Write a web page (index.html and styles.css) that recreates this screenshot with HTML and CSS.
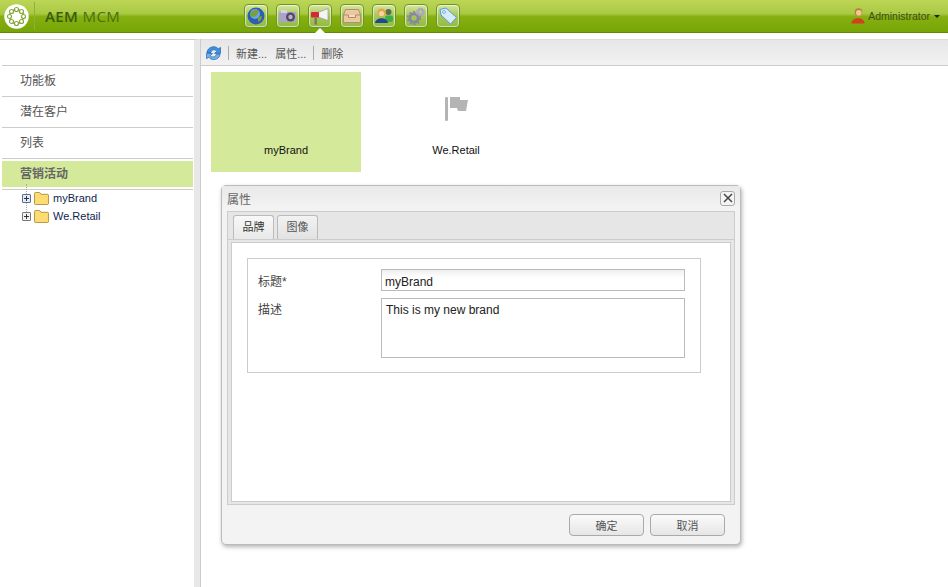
FILE: index.html
```html
<!DOCTYPE html>
<html lang="zh">

<head>
    <meta charset="UTF-8">
    <meta name="viewport" content="width=device-width, initial-scale=1.0">
    <title>AEM MCM</title>
    <link rel="stylesheet" href="styles.css">
</head>

<body>
    <header class="topbar">
        <svg class="logo" width="25" height="25" viewBox="0 0 25 25">
            <circle cx="12.5" cy="12.5" r="12.2" fill="#fff" />
            <circle cx="12.5" cy="12.5" r="7" fill="none" stroke="#86a93a" stroke-width="1.6" />
            <g fill="#fff" stroke="#86a93a" stroke-width="1.2">
                <circle cx="12.5" cy="5.5" r="2" />
                <circle cx="12.5" cy="19.5" r="2" />
                <circle cx="5.5" cy="12.5" r="2" />
                <circle cx="19.5" cy="12.5" r="2" />
                <circle cx="7.5" cy="7.5" r="2" />
                <circle cx="17.5" cy="7.5" r="2" />
                <circle cx="7.5" cy="17.5" r="2" />
                <circle cx="17.5" cy="17.5" r="2" />
            </g>
        </svg>
        <span class="brand-sep"></span>
        <span class="brand"><b>AEM</b> MCM</span>

        <nav class="apps">
            <a class="app">
                <svg width="18" height="18" viewBox="0 0 18 18">
                    <circle cx="9" cy="9" r="8.5" fill="#2c5fb0" />
                    <circle cx="8" cy="7" r="5" fill="#6ba6e0" />
                    <path d="M3 6 L8 2.5 L12 4 L10 8 L7 10 L4 9 Z M11 10 L15 9 L14 13 L11 15 Z" fill="#7a9f3c" />
                </svg>
            </a>
            <a class="app">
                <svg width="18" height="18" viewBox="0 0 18 18">
                    <rect x="0" y="5" width="17" height="10" rx="1" fill="#aca3cc" />
                    <rect x="2" y="3" width="6" height="3" fill="#d8d2e6" />
                    <circle cx="11.5" cy="10" r="4.5" fill="#4e4a62" />
                    <circle cx="11.5" cy="10" r="2.2" fill="#b8b4c8" />
                </svg>
            </a>
            <a class="app active">
                <svg width="18" height="18" viewBox="0 0 18 18">
                    <path d="M7 5.5 L17 1.5 V13.5 L7 10 Z" fill="#f4f4f0" stroke="#9a9a90" stroke-width=".7" />
                    <rect x="0" y="5" width="8" height="5.5" rx="1" fill="#d42a38" />
                    <rect x="3.5" y="10.5" width="2.4" height="7" fill="#85705c" />
                </svg>
            </a>
            <a class="app">
                <svg width="18" height="18" viewBox="0 0 18 18">
                    <path d="M2.5 2.5 H15.5 L17.5 8 V15.5 H.5 V8 Z" fill="#e9c8a2" stroke="#b98f66" />
                    <path d="M.5 8 H5.5 V10.5 H12.5 V8 H17.5" fill="#f3dcc0" stroke="#b58a5e" />
                </svg>
            </a>
            <a class="app">
                <svg width="18" height="18" viewBox="0 0 18 18">
                    <circle cx="13.5" cy="5" r="3" fill="#5e6a52" />
                    <rect x="10" y="8.5" width="8" height="6.5" rx="2" fill="#3aae48" />
                    <circle cx="6.5" cy="5.5" r="4" fill="#e9a63e" />
                    <circle cx="6.5" cy="6.5" r="2.6" fill="#f3d4a4" />
                    <path d="M0 16 C.5 9.5 12.5 9.5 13 16 Z" fill="#24488f" />
                </svg>
            </a>
            <a class="app">
                <svg width="18" height="18" viewBox="0 0 18 18">
                    <circle cx="7" cy="11" r="4.2" fill="none" stroke="#8986a0" stroke-width="3" />
                    <circle cx="7" cy="11" r="6.3" fill="none" stroke="#8986a0" stroke-width="1.6" stroke-dasharray="2 2" />
                    <circle cx="13.5" cy="5" r="2.6" fill="none" stroke="#aaa8bc" stroke-width="2.2" />
                    <circle cx="13.5" cy="5" r="4" fill="none" stroke="#aaa8bc" stroke-width="1.2" stroke-dasharray="1.6 1.6" />
                </svg>
            </a>
            <a class="app">
                <svg width="18" height="18" viewBox="0 0 18 18">
                    <path d="M1 2.5 L7 1 L17.5 10.5 L11.5 17 L2 8 Z" fill="#d6ebfa" stroke="#5b9bd0" />
                    <circle cx="5" cy="5" r="1.4" fill="#fff" stroke="#5b9bd0" stroke-width=".8" />
                </svg>
            </a>
        </nav>

        <div class="user">
            <svg width="14" height="16" viewBox="0 0 14 16">
                <circle cx="7.5" cy="4" r="3.8" fill="#b9803c" />
                <circle cx="7.8" cy="4.8" r="2.8" fill="#f3c79a" />
                <path d="M.5 15.5 C.5 8.5 13.5 8.5 13.5 15.5 Z" fill="#d2401c" />
            </svg>
            <span>Administrator</span>
            <i class="caret"></i>
        </div>
    </header>
    <div class="notch"></div>

    <div class="main">
        <aside class="sidebar">
            <div class="side-top"></div>
            <div class="side-item">功能板</div>
            <div class="side-item">潜在客户</div>
            <div class="side-item">列表</div>
            <div class="side-item current">营销活动</div>
            <ul class="tree">
                <li>
                    <i class="expander blue"></i>
                    <svg width="15" height="13" viewBox="0 0 16 14">
                        <path d="M.5 3 V1.5 Q.5 .5 1.5 .5 H6 L7.5 2.5 H14.5 Q15.5 2.5 15.5 3.5 V12.5 Q15.5 13.5 14.5 13.5 H1.5 Q.5 13.5 .5 12.5 Z" fill="#fddc72" stroke="#b08f3c" />
                    </svg>
                    <span>myBrand</span>
                </li>
                <li>
                    <i class="expander"></i>
                    <svg width="15" height="13" viewBox="0 0 16 14">
                        <path d="M.5 3 V1.5 Q.5 .5 1.5 .5 H6 L7.5 2.5 H14.5 Q15.5 2.5 15.5 3.5 V12.5 Q15.5 13.5 14.5 13.5 H1.5 Q.5 13.5 .5 12.5 Z" fill="#fddc72" stroke="#b08f3c" />
                    </svg>
                    <span>We.Retail</span>
                </li>
            </ul>
        </aside>

        <section class="content">
            <div class="toolbar">
                <svg class="refresh" width="15" height="16" viewBox="0 0 16 16">
                    <path d="M1 8 C1 1.5 10 -1 13 3.5 L15.5 2 V8.5 H9 L11.5 6.2 C9.5 3.5 5.5 4.5 5 8 Z" fill="#3d8fdc" stroke="#1e5fa8" stroke-width=".7" />
                    <path d="M15 9.5 C14.5 15 6 17 3 12.5 L.5 14 V8.5 H7 L4.5 10.8 C6.5 13 10 12.5 11 9.5 Z" fill="#6fb3ee" stroke="#1e5fa8" stroke-width=".7" />
                </svg>
                <span class="tool-sep"></span>
                <a class="tool">新建...</a>
                <a class="tool">属性...</a>
                <span class="tool-sep"></span>
                <a class="tool">删除</a>
            </div>
            <div class="tiles">
                <div class="tile selected"><span>myBrand</span></div>
                <div class="tile">
                    <svg class="flag" width="24" height="24" viewBox="0 0 24 24">
                        <rect x="0" y="0" width="3" height="24" rx="1.2" fill="#b4b4b4" />
                        <path d="M5 0 H15 V3 H23 L21 14 H13 L12 11 H5 Z" fill="#b4b4b4" />
                    </svg>
                    <span>We.Retail</span>
                </div>
            </div>
        </section>
    </div>

    <div class="dialog">
        <div class="dialog-head">
            <span>属性</span>
            <a class="close">
                <svg width="10" height="10" viewBox="0 0 10 10">
                    <path d="M1 1 L9 9 M9 1 L1 9" stroke="#444" stroke-width="1.5" />
                </svg>
            </a>
        </div>
        <div class="dialog-body">
            <div class="tabs">
                <a class="tab on">品牌</a>
                <a class="tab">图像</a>
            </div>
            <div class="tab-panel">
                <div class="fieldset">
                    <div class="field">
                        <label>标题*</label>
                        <input type="text" value="myBrand">
                    </div>
                    <div class="field">
                        <label>描述</label>
                        <textarea>This is my new brand</textarea>
                    </div>
                </div>
            </div>
        </div>
        <div class="dialog-foot">
            <button>确定</button>
            <button>取消</button>
        </div>
    </div>
</body>

</html>
```

FILE: styles.css
```css
* {
    box-sizing: border-box;
}

html,
body {
    height: 100%;
}

body {
    margin: 0;
    overflow: hidden;
    background-color: #fff;
    color: #333;
    font-family: "Liberation Sans", "Noto Sans CJK SC", sans-serif;
    font-size: 12px;
}

.topbar {
    display: flex;
    align-items: center;
    height: 33px;
    padding-left: 4px;
    background: linear-gradient(#bdd556 0, #a9ca44 42%, #86b010 52%, #76a506 100%);
    border-bottom: 1px solid #5e8a0a;
}

.logo {
    flex: none;
}

.brand-sep {
    width: 1px;
    height: 28px;
    margin-left: 5px;
    background-color: #8fb03c;
}

.brand {
    width: 199px;
    margin-left: 10px;
    color: #4a7010;
    font-family: "Open Sans", sans-serif;
    font-size: 15px;
    letter-spacing: .4px;
}

.brand b {
    font-weight: 600;
    color: #3a5a10;
}

.apps {
    display: flex;
    gap: 8px;
}

.app {
    display: flex;
    align-items: center;
    justify-content: center;
    width: 24px;
    height: 24px;
    border: 1px solid #6d9620;
    border-radius: 4px;
    background: linear-gradient(#d6e69e, #a5c75a 50%, #93bb40);
    box-shadow: inset 0 0 0 1px rgba(255, 255, 255, .55);
}

.user {
    display: flex;
    align-items: center;
    gap: 3px;
    margin-left: auto;
    margin-right: 8px;
    color: #3f4e1c;
    font-size: 10.5px;
}

.caret {
    width: 0;
    height: 0;
    margin-left: 1px;
    border-left: 3px solid transparent;
    border-right: 3px solid transparent;
    border-top: 3px solid #222;
}

.notch {
    position: absolute;
    top: 28px;
    left: 315px;
    width: 10px;
    height: 10px;
    background-color: #fff;
    clip-path: polygon(50% 0, 100% 50%, 0 50%);
}

.main {
    display: flex;
    height: calc(100% - 33px);
    padding-top: 6px;
}

.sidebar {
    flex: none;
    width: 200px;
    border-top: 1px solid #ccc;
    border-right: 6px solid #e8e8e8;
    padding: 0 1px 0 2px;
    color: #555;
}

.side-top {
    height: 26px;
    border-bottom: 1px solid #ccc;
}

.side-item {
    height: 31px;
    padding: 7px 0 0 18px;
    line-height: 16px;
    border-bottom: 1px solid #ccc;
}

.side-item.current {
    height: 28px;
    margin-top: 2px;
    padding-top: 5px;
    background-color: #d5e99a;
    background-clip: padding-box;
    border-bottom: 2px solid #fff;
    box-shadow: 0 1px 0 #ccc;
    font-weight: bold;
    color: #666;
}

.tree {
    margin: 0;
    padding: 0 0 0 20px;
    list-style: none;
    color: #0f1f50;
    font-size: 11px;
}

.tree li {
    position: relative;
    display: flex;
    align-items: center;
    gap: 3px;
    height: 18px;
}

.tree li span {
    margin-left: 1px;
}

.tree li::before {
    content: "";
    position: absolute;
    left: 4px;
    top: -5px;
    height: 10px;
    border-left: 1px dotted #aaa;
}

.expander {
    position: relative;
    z-index: 1;
    width: 9px;
    height: 9px;
    border: 1px solid #777;
    border-radius: 1px;
    background-color: #f2f2f2;
}

.expander.blue {
    border-color: #56709a;
    background-color: #e4ebf6;
}

.expander::before,
.expander::after {
    content: "";
    position: absolute;
    background-color: #333;
}

.expander::before {
    left: 1px;
    top: 3px;
    width: 5px;
    height: 1px;
}

.expander::after {
    left: 3px;
    top: 1px;
    width: 1px;
    height: 5px;
}

.content {
    flex: 1;
    border-left: 1px solid #ccc;
}

.toolbar {
    display: flex;
    align-items: center;
    gap: 7px;
    height: 27px;
    padding-left: 5px;
    background: linear-gradient(#e6e6e6, #f2f2f2);
    border-top: 1px solid #ddd;
    border-bottom: 1px solid #ccc;
    color: #555;
    font-size: 11px;
}

.refresh {
    flex: none;
}

.tool-sep {
    width: 1px;
    height: 14px;
    background-color: #aaa;
}

.tool + .tool {
    margin-left: 1px;
}

.tiles {
    display: flex;
    gap: 20px;
    padding: 6px 0 0 10px;
}

.tile {
    display: flex;
    flex-direction: column;
    align-items: center;
    justify-content: flex-end;
    width: 150px;
    height: 100px;
    padding-bottom: 16px;
    color: #111;
    font-size: 11px;
}

.tile.selected {
    background-color: #d5e99a;
}

.tile .flag {
    margin-bottom: 23px;
    margin-left: 1px;
}

.dialog {
    position: absolute;
    left: 221px;
    top: 185px;
    display: flex;
    flex-direction: column;
    width: 520px;
    height: 360px;
    padding: 0 5px;
    background-color: #f3f3f3;
    border: 1px solid #bbb;
    border-radius: 5px;
    box-shadow: 1px 2px 4px rgba(0, 0, 0, .3);
}

.dialog-head {
    display: flex;
    align-items: center;
    justify-content: space-between;
    flex: none;
    height: 25px;
    margin: 0 -5px;
    padding: 0 5px 1px 5px;
    background: linear-gradient(#e9e9e9, #f4f4f4);
    color: #666;
}

.close {
    display: flex;
    align-items: center;
    justify-content: center;
    width: 15px;
    height: 15px;
    border: 1px solid #aaa;
    border-radius: 3px;
    background-color: #f4f4f4;
}

.dialog-body {
    display: flex;
    flex-direction: column;
    flex: none;
    height: 294px;
    border: 1px solid #ccc;
    background-color: #e6e6e6;
}

.tabs {
    display: flex;
    gap: 3px;
    flex: none;
    height: 28px;
    padding: 3px 0 0 5px;
    border-bottom: 1px solid #ccc;
}

.tab {
    display: flex;
    align-items: center;
    justify-content: center;
    width: 41px;
    padding-bottom: 3px;
    border: 1px solid #bbb;
    border-bottom: 0;
    border-radius: 3px 3px 0 0;
    background: linear-gradient(#f2f2f2, #e2e2e2);
    color: #555;
    font-size: 11px;
}

.tab.on {
    background: linear-gradient(#f8f8f8, #e9e9e9);
    color: #333;
}

.tab-panel {
    flex: 1;
    margin: 2px 3px 2px 3px;
    padding: 15px 29px 0 15px;
    background-color: #fff;
    border: 1px solid #ccc;
}

.fieldset {
    height: 115px;
    padding: 10px 15px 0 10px;
    border: 1px solid #ccc;
}

.field {
    display: flex;
    align-items: flex-start;
    margin-bottom: 4px;
    color: #444;
}

.field label {
    flex: none;
    width: 123px;
    line-height: 25px;
}

.field:first-child label {
    padding-top: 1px;
    line-height: 24px;
}

.field input,
.field textarea {
    width: 304px;
    padding: 2px 4px;
    border: 1px solid #bbb;
    outline: 0;
    font-family: inherit;
    font-size: 12px;
    color: #222;
    resize: none;
}

.field input {
    height: 22px;
    padding: 4px 4px 0 3px;
    background: linear-gradient(#efefef, #fff 40%);
}

.field textarea {
    height: 60px;
    padding-top: 4px;
}

.dialog-foot {
    display: flex;
    justify-content: flex-end;
    gap: 6px;
    padding: 9px 10px 0 0;
}

.dialog-foot button {
    width: 75px;
    height: 22px;
    padding: 0;
    border: 1px solid #aaa;
    border-radius: 4px;
    background: linear-gradient(#fafafa, #e6e6e6);
    color: #555;
    font-family: inherit;
    font-size: 11px;
}
```
